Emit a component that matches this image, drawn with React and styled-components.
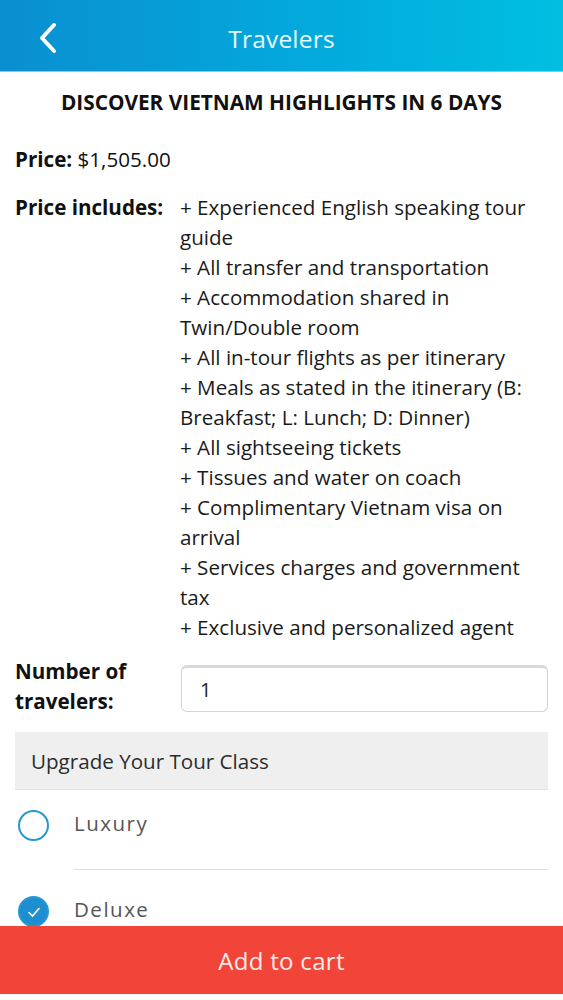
import React, { useState } from "react"
import styled, { createGlobalStyle } from "styled-components"

const GlobalStyle = createGlobalStyle`
    body {
        margin: 0;
        background: #fff;
        font-family: "Open Sans", "Noto Sans", sans-serif;
        color: #111;
    }
    * {
        box-sizing: border-box;
    }
`

const Page = styled.div`
    min-height: 100vh;
    padding-bottom: 80px;
`

const Header = styled.header`
    height: 72px;
    display: flex;
    align-items: center;
    justify-content: center;
    position: relative;
    background: linear-gradient(90deg, #0a8fd0 0%, #03a9dc 55%, #00bfe1 100%);
    border-bottom: 1px solid #6fd6f2;
`

const BackButton = styled.button`
    position: absolute;
    left: 30px;
    top: 20px;
    width: 36px;
    height: 36px;
    padding: 0;
    border: none;
    background: none;
    display: flex;
    align-items: center;
    justify-content: center;
`

const HeaderTitle = styled.h1`
    margin: 0 0 -6px;
    font-size: 24.5px;
    font-weight: 400;
    color: #eafaff;
    letter-spacing: 0.2px;
`

const Content = styled.main`
    padding: 0 15px;
`

const TourTitle = styled.h2`
    margin: 16px 0 0;
    text-align: center;
    font-size: 20.8px;
    line-height: 28px;
    font-weight: 700;
    color: #111;
`

const PriceLine = styled.div`
    margin-top: 28px;
    font-size: 20.6px;
    line-height: 30px;
`

const InfoRow = styled.div`
    display: grid;
    grid-template-columns: 165px 1fr;
    margin-top: 18px;
    font-size: 20.6px;
    line-height: 30px;
`

const Label = styled.b`
    font-weight: 700;
    color: #111;
`

const IncludeList = styled.ul`
    margin: 0;
    padding: 0;
    list-style: none;
    color: #1a1a1a;
`

const TravelerRow = styled.div`
    display: grid;
    grid-template-columns: 166px 1fr;
    align-items: start;
    margin-top: 14px;
    font-size: 20.6px;
    line-height: 30px;
`

const NumberInput = styled.input`
    margin-top: 9px;
    height: 47px;
    width: 100%;
    border: 1px solid #d6d6d6;
    border-top: 3px solid #d9d9d9;
    border-radius: 6px;
    padding: 0 18px;
    font-family: inherit;
    font-size: 20px;
    color: #222;
    outline: none;
`

const SectionHeader = styled.div`
    margin-top: 16px;
    height: 58px;
    display: flex;
    align-items: center;
    padding: 0 16px;
    background: #efeff0;
    border-bottom: 1px solid #e2e2e2;
    font-size: 20.6px;
    color: #2c2c2c;
`

const OptionList = styled.div`
    display: flex;
    flex-direction: column;
`

const Option = styled.label`
    display: flex;
    align-items: flex-start;
    gap: 25px;
    padding-left: 3px;
    cursor: pointer;
`

const Radio = styled.span`
    flex: 0 0 auto;
    width: 31px;
    height: 31px;
    margin-top: ${p => p.$offset}px;
    border-radius: 50%;
    border: 2px solid #2598d4;
    background: ${p => (p.$checked ? "#1d8fd1" : "#fff")};
    display: flex;
    align-items: center;
    justify-content: center;
`

const OptionText = styled.span`
    flex: 1;
    height: 80px;
    padding-top: ${p => p.$offset}px;
    font-size: 20.5px;
    letter-spacing: 1.5px;
    color: #555;
    border-bottom: ${p => (p.$last ? "none" : "1px solid #dedede")};
`

const CartButton = styled.button`
    position: fixed;
    left: 0;
    right: 0;
    bottom: 6px;
    height: 68px;
    border: none;
    background: #f2453a;
    color: #fde9e6;
    font-family: "Open Sans", "Noto Sans", sans-serif;
    font-size: 24px;
    font-weight: 400;
    letter-spacing: 0.3px;
`

const BottomStrip = styled.div`
    position: fixed;
    left: 0;
    right: 0;
    bottom: 0;
    height: 6px;
    background: #fff;
`

const includes = [
    "+ Experienced English speaking tour guide",
    "+ All transfer and transportation",
    "+ Accommodation shared in Twin/Double room",
    "+ All in-tour flights as per itinerary",
    "+ Meals as stated in the itinerary (B: Breakfast; L: Lunch; D: Dinner)",
    "+ All sightseeing tickets",
    "+ Tissues and water on coach",
    "+ Complimentary Vietnam visa on arrival",
    "+ Services charges and government tax",
    "+ Exclusive and personalized agent",
]

const classes = ["Luxury", "Deluxe"]

function App() {
    const [selected, setSelected] = useState("Deluxe")

    return (
        <Page>
            <GlobalStyle />
            <Header>
                <BackButton aria-label="Back">
                    <svg width="22" height="32" viewBox="0 0 22 32">
                        <path
                            d="M17 3 L5 16 L17 29"
                            fill="none"
                            stroke="#fff"
                            strokeWidth="4"
                            strokeLinecap="round"
                            strokeLinejoin="round"
                        />
                    </svg>
                </BackButton>
                <HeaderTitle>Travelers</HeaderTitle>
            </Header>

            <Content>
                <TourTitle>DISCOVER VIETNAM HIGHLIGHTS IN 6 DAYS</TourTitle>

                <PriceLine>
                    <Label>Price:</Label> $1,505.00
                </PriceLine>

                <InfoRow>
                    <Label>Price includes:</Label>
                    <IncludeList>
                        {includes.map((item, i) => (
                            <li key={i}>{item}</li>
                        ))}
                    </IncludeList>
                </InfoRow>

                <TravelerRow>
                    <Label>
                        Number of
                        <br />
                        travelers:
                    </Label>
                    <NumberInput type="text" defaultValue="1" />
                </TravelerRow>
            </Content>

            <Content>
                <SectionHeader>Upgrade Your Tour Class</SectionHeader>
                <OptionList>
                    {classes.map((name, i) => {
                        const checked = selected === name
                        const offset = i === 0 ? 20 : 26
                        return (
                            <Option key={name} onClick={() => setSelected(name)}>
                                <Radio $checked={checked} $offset={offset}>
                                    {checked && (
                                        <svg width="14" height="12" viewBox="0 0 14 12">
                                            <path
                                                d="M2 6.5 L5.5 10 L12 2.5"
                                                fill="none"
                                                stroke="#fff"
                                                strokeWidth="1.6"
                                                strokeLinecap="round"
                                            />
                                        </svg>
                                    )}
                                </Radio>
                                <OptionText $offset={offset - 1} $last={i === classes.length - 1}>
                                    {name}
                                </OptionText>
                            </Option>
                        )
                    })}
                </OptionList>
            </Content>

            <CartButton>Add to cart</CartButton>
            <BottomStrip />
        </Page>
    )
}

export default App
